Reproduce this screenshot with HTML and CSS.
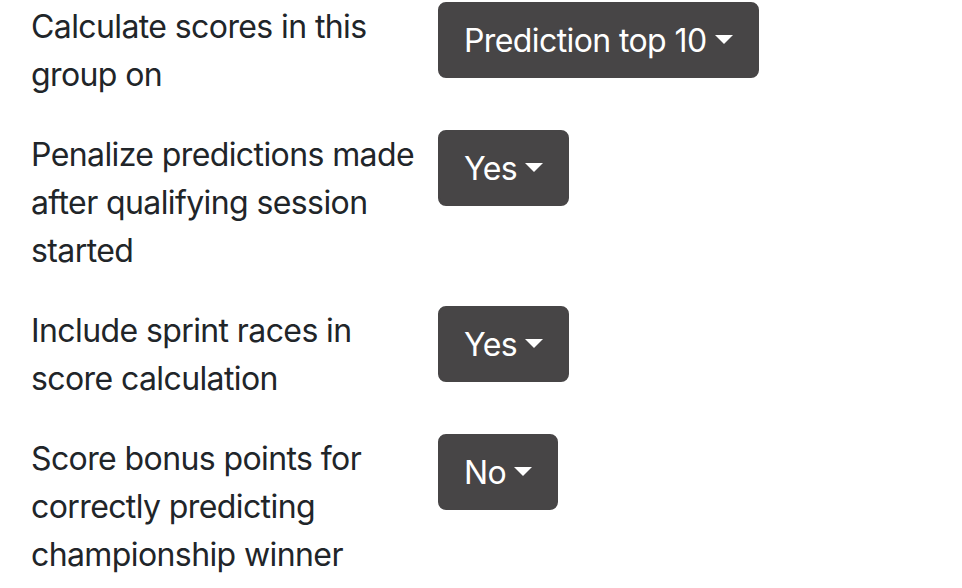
FILE: index.html
```html
<!DOCTYPE html>
<html>
<head>
<meta charset="utf-8">
<link rel="stylesheet" href="styles.css">
</head>
<body>
<form class="settings">
  <div class="row">
    <label class="label">Calculate scores in this group on</label>
    <div class="control"><button type="button" class="btn dropdown-toggle">Prediction top 10</button></div>
  </div>
  <div class="row">
    <label class="label">Penalize predictions made after qualifying session started</label>
    <div class="control"><button type="button" class="btn dropdown-toggle">Yes</button></div>
  </div>
  <div class="row">
    <label class="label">Include sprint races in score calculation</label>
    <div class="control"><button type="button" class="btn dropdown-toggle">Yes</button></div>
  </div>
  <div class="row">
    <label class="label">Score bonus points for correctly predicting championship winner</label>
    <div class="control"><button type="button" class="btn dropdown-toggle">No</button></div>
  </div>
</form>
</body>
</html>
```
FILE: styles.css
```css
html, body {
  margin: 0;
  padding: 0;
  background: #ffffff;
}
body {
  font-family: Inter, "Helvetica Neue", Arial, sans-serif;
  font-size: 32px;
  line-height: 48px;
  letter-spacing: -0.6px;
  color: #212529;
}
.settings {
  padding: 3px 0 0 31px;
}
.row {
  display: flex;
  align-items: flex-start;
  margin-bottom: 32px;
}
.label {
  width: 392px;
  flex: none;
}
.control {
  margin-left: 15px;
  margin-top: -1px;
}
.btn {
  display: inline-flex;
  align-items: center;
  font-family: inherit;
  font-size: 32px;
  line-height: 48px;
  letter-spacing: -0.6px;
  color: #ffffff;
  background: #474546;
  border: 2px solid #474546;
  border-radius: 8px;
  padding: 13px 24px 11px;
  cursor: pointer;
}
.dropdown-toggle::after {
  content: "";
  display: inline-block;
  margin-left: 8px;
  margin-top: -3px;
  border-top: 9.6px solid #ffffff;
  border-left: 9.6px solid transparent;
  border-right: 9.6px solid transparent;
  border-bottom: 0;
}
```
